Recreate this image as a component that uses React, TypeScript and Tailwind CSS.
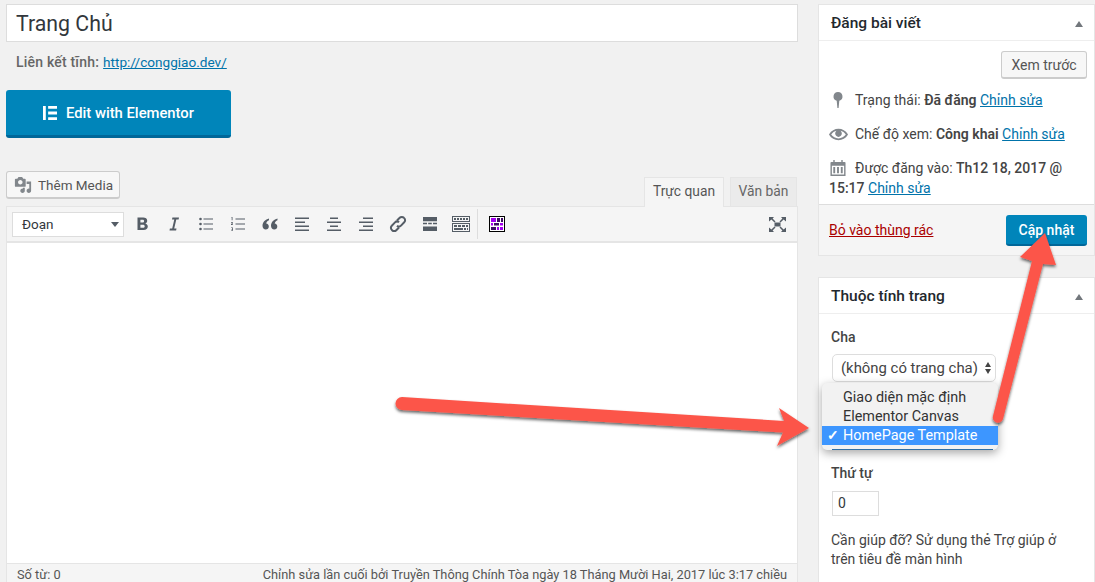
import React from "react";

const Ic = ({ children, w = 20, h = 20, vb = "0 0 20 20", className = "" }: { children: React.ReactNode; w?: number; h?: number; vb?: string; className?: string }) => (
  <svg width={w} height={h} viewBox={vb} fill="#555d66" className={"shrink-0 " + className}>
    {children}
  </svg>
);

const Bold = () => <Ic><path d="M5.500 3.500h5.700c2.400 0 4 1.200 4 3.200 0 1.300-.7 2.300-1.900 2.800 1.600.4 2.500 1.600 2.500 3.100 0 2.200-1.700 3.400-4.200 3.400H5.500V3.500zm2.900 2.200v2.900h2c1.100 0 1.700-.5 1.700-1.500s-.6-1.400-1.700-1.400h-2zm0 5v3.100h2.400c1.200 0 1.900-.6 1.900-1.600s-.7-1.500-1.900-1.500H8.400z" /></Ic>;
const Italic = () => <Ic><path d="M15 3.500l-.4 2h-2.300L10.200 14.500h2.300l-.4 2H5.500l.4-2h2.300L10.300 5.500H8l.4-2H15z" /></Ic>;
const Bullets = () => <Ic><circle cx="4.500" cy="5" r="1.300" /><circle cx="4.500" cy="10" r="1.300" /><circle cx="4.500" cy="15" r="1.300" /><path d="M7.500 4.500H17v1H7.500zM7.500 9.500H17v1H7.500zM7.500 14.500H17v1H7.500z" /></Ic>;
const Numbers = () => <Ic><path d="M7.500 4.500H17v1H7.500zM7.500 9.500H17v1H7.500zM7.500 14.500H17v1H7.500z" /><path d="M3.500 3h1v3.200h-.8V3.800h-.3zM3 8.300h2v.7L4 10.300h1v.6H3v-.6l1.100-1.400H3zM3 13.400h2v3.400H3v-.6h1.200v-.8h-.8v-.5h.8V14H3z" /></Ic>;
const Quote = () => <Ic><path d="M9 4.500C5.500 5.500 2.500 8 2.500 11.800c0 2.200 1.400 3.700 3.300 3.700 1.700 0 3-1.300 3-3 0-1.600-1.100-2.800-2.600-2.900.2-1.500 1.400-2.600 2.800-3.300zM17.500 4.500c-3.500 1-6.500 3.500-6.500 7.300 0 2.200 1.400 3.700 3.300 3.700 1.700 0 3-1.300 3-3 0-1.600-1.100-2.800-2.600-2.900.2-1.500 1.400-2.600 2.800-3.300z" /></Ic>;
const AlignL = () => <Ic><path d="M3 3.500h14v1.500H3zM3 7.500h10v1.500H3zM3 11.500h14V13H3zM3 15.500h14V17H3z" /></Ic>;
const AlignC = () => <Ic><path d="M6 3.500h8v1.500H6zM3 7.500h14v1.500H3zM6 11.500h8V13H6zM3 15.500h14V17H3z" /></Ic>;
const AlignR = () => <Ic><path d="M7 3.500h10v1.500H7zM3 7.500h14v1.500H3zM7 11.500h10V13H7zM3 15.500h14V17H3z" /></Ic>;
const LinkI = () => (
  <Ic>
    <g fill="none" stroke="#555d66" strokeWidth="2">
      <path d="M9 6.500l2.700-2.700a2.900 2.900 0 0 1 4.200 0l.3.300a2.900 2.900 0 0 1 0 4.200L13 11.600a2.900 2.900 0 0 1-4 .1" />
      <path d="M11 13.500l-2.700 2.700a2.900 2.900 0 0 1-4.200 0l-.3-.3a2.900 2.900 0 0 1 0-4.200L7 8.400a2.900 2.900 0 0 1 4-.1" />
    </g>
  </Ic>
);
const More = () => <Ic><path d="M3 3h14v4.300H3zM3 8.700h4v1.600H3zM8.200 8.700h3.600v1.600H8.200zM13 8.700h4v1.600h-4zM3 12.500h14V17H3z" /></Ic>;
const Kitchen = () => (
  <svg width="18" height="16" viewBox="0 0 18 16" className="shrink-0">
    <path fillRule="evenodd" fill="#555d66" d="M0 0h18v6H0zM1 1v4h16V1zM0 7h18v9H0zM1 8v7h16V8z" />
    <path fill="#555d66" d="M2 2h2v2H2zM5 2h2v2H5zM8 2h2v2H8zM11 2h2v2h-2zM14 2h2v2h-2zM2 9h3v2H2zM6 9h3v2H6zM10 9h3v2h-3zM14 9h2v2h-2zM2 12h9v2H2zM12 12h2v2h-2zM15 12h1v2h-1z" />
  </svg>
);
const Purple = () => (
  <svg width="16" height="16" viewBox="0 0 16 16" className="shrink-0">
    <rect x="0.500" y="0.500" width="15" height="15" fill="#fff" stroke="#000" />
    <path fill="#a200ee" d="M2 2h5v4H2zM11 7h3v2.500h-3zM2 7h2v2.500H2zM8 11h2v3H8zM11 11h3v3h-3z" />
    <path fill="#3d0a63" d="M8 2h3v4H8zM12 2h2v4h-2zM5 7h5v2.500H5zM2 11h5v3H2z" />
  </svg>
);
const Fullscreen = () => (
  <svg width="17" height="15" viewBox="0 0 17 15" className="shrink-0" fill="#555d66">
    <path d="M5.500 5.500h6v4h-6z" />
    <path d="M0 0h5L3.600 1.500 6.500 4.500 5.500 5.500 2.400 2.600 0 4.500zM17 0h-5l1.400 1.500-2.900 3 1 1 3.100-2.900L17 4.500zM0 15h5l-1.400-1.500 2.900-3-1-1-3.100 2.900L0 10.500zM17 15h-5l1.400-1.500-2.900-3 1-1 3.100 2.900 2.400-1.900z" />
  </svg>
);
const Media = () => (
  <svg width="18" height="18" viewBox="0 0 20 20" fill="#82878c" className="shrink-0">
    <path d="M13 11V4c0-.55-.45-1-1-1h-1.670L9 1H5L3.670 3H2c-.55 0-1 .45-1 1v7c0 .55.45 1 1 1h10c.55 0 1-.45 1-1zM7 4.500c1.380 0 2.500 1.120 2.500 2.500S8.380 9.500 7 9.500 4.500 8.380 4.500 7 5.620 4.500 7 4.500zM14 6h5v10.500c0 1.380-1.120 2.500-2.500 2.500S14 17.880 14 16.500s1.120-2.500 2.500-2.500c.17 0 .34.020.5.050V9h-3V6zm-4 8.050V13h2v3.500c0 1.380-1.120 2.500-2.500 2.500S7 17.880 7 16.500 8.120 14 9.500 14c.17 0 .34.020.5.050z" />
  </svg>
);
const Elementor = () => (
  <svg width="14" height="14" viewBox="0 0 15 15" fill="#fff" className="shrink-0">
    <path d="M0 0h3v15H0zM5.500 0H15v3H5.500zM5.500 6H15v3H5.500zM5.500 12H15v3H5.500z" />
  </svg>
);
const Pin = () => (
  <svg width="10" height="16" viewBox="0 0 10 16" fill="#82878c" className="shrink-0">
    <path d="M5 0a4.500 4.500 0 0 1 1.300 8.800L5.600 16H4.400l-.7-7.200A4.500 4.500 0 0 1 5 0z" />
  </svg>
);
const Eye = () => (
  <svg width="19" height="19" viewBox="0 0 20 20" fill="#82878c" className="shrink-0">
    <path d="M19.700 9.400C17.700 6 14 3.900 10 3.900S2.300 6 .3 9.400L0 10l.3.600c2 3.400 5.700 5.500 9.700 5.500s7.700-2.100 9.700-5.500l.3-.6-.3-.6zM10 14.100c-3.100 0-6-1.600-7.700-4.100C3.600 8 5.700 6.600 8 6.100c-.9.600-1.500 1.700-1.500 2.900 0 1.900 1.600 3.500 3.500 3.500s3.500-1.600 3.500-3.500c0-1.200-.6-2.300-1.500-2.900 2.300.5 4.400 1.900 5.700 3.900-1.700 2.500-4.600 4.100-7.700 4.100z" />
  </svg>
);
const Calendar = () => (
  <svg width="16" height="16" viewBox="0 0 16 17" fill="#82878c" className="shrink-0">
    <path fillRule="evenodd" d="M1 2h2V0h1.500v2h7V0H13v2h2a1 1 0 0 1 1 1v14H0V3a1 1 0 0 1 1-1zM1.500 6v9.500h13V6z" />
    <path d="M3 7.500h2V14H3zM7 7.500h2V14H7zM11 7.500h2V14h-2z" />
  </svg>
);
const Caret = () => <span className="w-0 h-0 border-l-[4px] border-r-[4px] border-b-[6px] border-l-transparent border-r-transparent border-b-[#72777c]" />;

const LinkT = ({ children }: { children: React.ReactNode }) => <a className="text-[#0073aa] underline">{children}</a>;

const ToolBtn = ({ children, w = 32 }: { children: React.ReactNode; w?: number }) => (
  <span className="flex items-center justify-center h-[28px]" style={{ width: w }}>{children}</span>
);

export default function App() {
  return (
    <div className="relative w-[1095px] h-[582px] overflow-hidden bg-[#f1f1f1] flex items-start pl-[6px] pt-[4px] text-[14px] text-[#444] font-['Roboto','Liberation_Sans',sans-serif]">
      <main className="w-[792px] shrink-0 flex flex-col">
        <div className="h-[38px] bg-white border border-[#ddd] flex items-center pl-[9px] pt-[2px] text-[21.3px] text-[#32373c]">Trang Chủ</div>
        <div className="mt-[10px] h-[20px] pl-[10px] flex items-center gap-[4px] font-medium text-[#666] text-[14px] tracking-[0.2px]">
          <span>Liên kết tĩnh:</span>
          <span className="font-normal text-[13.6px] tracking-normal"><LinkT>http://conggiao.dev/</LinkT></span>
        </div>
        <button className="mt-[18px] w-[225px] h-[48px] rounded-[3px] bg-[#0085ba] border-b-[3px] border-[#006799] flex items-center justify-center gap-[9px] pt-[1px] text-white text-[14.8px] font-medium">
          <Elementor />
          <span>Edit with Elementor</span>
        </button>
        <div className="mt-[33px] h-[35px] flex items-start justify-between">
          <button className="w-[114px] h-[28px] bg-[#f7f7f7] border border-[#ccc] rounded-[3px] border-b-[2px] flex items-center pl-[7px] gap-[6px] pt-[1px] text-[#555] text-[13.5px]">
            <Media />
            <span>Thêm Media</span>
          </button>
          <div className="flex items-end self-end gap-[6px] pr-px relative z-10 -mb-px">
            <span className="w-[80px] h-[30px] pb-[2px] bg-[#f5f5f5] border border-[#e5e5e5] border-b-0 flex items-center justify-center text-[#555] text-[13.8px]">Trực quan</span>
            <span className="w-[67px] h-[29px] mb-px pb-[2px] bg-[#ebebeb] border border-[#e5e5e5] border-b-0 flex items-center justify-center text-[#666] text-[13.8px]">Văn bản</span>
          </div>
        </div>
        <div className="flex flex-col border border-[#e5e5e5] bg-white">
          <div className="h-[36px] bg-[#f5f5f5] border-b-2 border-[#e5e5e5] flex items-center pl-[5px] pr-[11px] shrink-0">
            <div className="w-[112px] h-[25px] bg-white border border-[#ddd] flex items-center justify-between pl-[9px] pr-[3px] text-[#32373c] text-[13.5px] mr-[2px]">
              <span>Đoạn</span>
              <span className="w-0 h-0 mr-[1px] border-l-[4px] border-r-[4px] border-t-[5px] border-l-transparent border-r-transparent border-t-[#555d66]" />
            </div>
            <ToolBtn><Bold /></ToolBtn>
            <ToolBtn><Italic /></ToolBtn>
            <ToolBtn><Bullets /></ToolBtn>
            <ToolBtn><Numbers /></ToolBtn>
            <ToolBtn><Quote /></ToolBtn>
            <ToolBtn><AlignL /></ToolBtn>
            <ToolBtn><AlignC /></ToolBtn>
            <ToolBtn><AlignR /></ToolBtn>
            <ToolBtn><LinkI /></ToolBtn>
            <ToolBtn><More /></ToolBtn>
            <ToolBtn w={30}><Kitchen /></ToolBtn>
            <span className="w-px h-[30px] bg-[#ddd] ml-[1px]" />
            <span className="ml-[11px]"><Purple /></span>
            <span className="ml-auto"><Fullscreen /></span>
          </div>
          <div className="h-[320px] bg-white" />
          <div className="h-[23px] bg-[#f5f5f5] border-t border-[#e5e5e5] flex items-center justify-between pl-[10px] pr-[10px] text-[12.8px] text-[#555] shrink-0">
            <span>Số từ: 0</span>
            <span>Chỉnh sửa lần cuối bởi Truyền Thông Chính Tòa ngày 18 Tháng Mười Hai, 2017 lúc 3:17 chiều</span>
          </div>
        </div>
      </main>

      <aside className="ml-[20px] w-[277px] shrink-0 flex flex-col gap-[21px]">
        <section className="h-[252px] shrink-0 bg-white border border-[#e5e5e5] flex flex-col">
          <div className="h-[36px] border-b border-[#eee] flex items-center justify-between pl-[12px] pr-[11px] pt-[2px] text-[15.5px] font-medium text-[#23282d] shrink-0">
            <span>Đăng bài viết</span>
            <Caret />
          </div>
          <div className="flex-1">
            <div className="flex justify-end pt-[10px] pr-[7px]">
              <button className="w-[86px] h-[28px] pt-[1px] bg-[#f7f7f7] border border-[#ccc] border-b-[2px] rounded-[3px] text-[#555]">Xem trước</button>
            </div>
            <div className="flex items-center h-[18px] mt-[12px] pl-[14px]">
              <Pin />
              <span className="ml-[12px]">Trạng thái: <b className="font-semibold">Đã đăng</b> <LinkT>Chỉnh sửa</LinkT></span>
            </div>
            <div className="flex items-center h-[18px] mt-[16px] pl-[10px]">
              <Eye />
              <span className="ml-[7px]">Chế độ xem: <b className="font-semibold">Công khai</b> <LinkT>Chỉnh sửa</LinkT></span>
            </div>
            <div className="mt-[15px] pl-[10px] pr-[8px] leading-[20px]">
              <div className="flex items-center h-[20px] pl-px">
                <Calendar />
                <span className="ml-[9px] whitespace-nowrap">Được đăng vào: <b className="font-medium">Th12 18, 2017 @</b></span>
              </div>
              <div><b className="font-medium">15:17</b> <LinkT>Chỉnh sửa</LinkT></div>
            </div>
          </div>
          <div className="h-[51px] bg-[#f5f5f5] border-t border-[#ddd] flex items-center justify-between pl-[10px] pr-[7px] shrink-0">
            <a className="text-[#a00] underline">Bỏ vào thùng rác</a>
            <button className="w-[81px] h-[31px] pt-[3px] rounded-[3px] bg-[#0085ba] border-b-[2px] border-[#006799] text-white font-medium">Cập nhật</button>
          </div>
        </section>

        <section className="h-[320px] shrink-0 bg-white border border-[#e5e5e5] flex flex-col pb-0">
          <div className="h-[36px] border-b border-[#eee] flex items-center justify-between pl-[12px] pr-[11px] pt-[2px] text-[15.5px] font-medium text-[#23282d] shrink-0">
            <span>Thuộc tính trang</span>
            <Caret />
          </div>
          <div className="pl-[12px] relative">
            <div className="mt-[14px] font-medium text-[#444] h-[18px] leading-[18px]">Cha</div>
            <div className="mt-[8px] ml-px w-[164px] h-[28px] bg-white border border-[#ddd] rounded-[5px] flex items-center justify-between pl-[8px] pr-[4px] text-[14.9px]">
              <span>(không có trang cha)</span>
              <span className="flex flex-col gap-[2px]">
                <span className="w-0 h-0 border-l-[3.500px] border-r-[3.500px] border-b-[5px] border-l-transparent border-r-transparent border-b-[#444]" />
                <span className="w-0 h-0 border-l-[3.500px] border-r-[3.500px] border-t-[5px] border-l-transparent border-r-transparent border-t-[#444]" />
              </span>
            </div>
            <div className="mt-[82px] font-medium h-[18px] leading-[18px]">Thứ tự</div>
            <div className="mt-[9px] ml-px w-[47px] h-[25px] bg-white border border-[#ddd] flex items-center pl-[5px] text-[14px] text-[#32373c]">0</div>
            <p className="mt-[15px] leading-[19px] pr-[30px]">Cần giúp đỡ? Sử dụng thẻ Trợ giúp ở trên tiêu đề màn hình</p>

            <div className="absolute left-[3px] top-[69px] w-[176px] h-[67px] rounded-[5px] bg-[#f2f2f2] shadow-[0_3px_10px_rgba(0,0,0,0.35)] pt-[5px] text-[14.4px] text-[#333] overflow-hidden">
              <div className="h-[19px] leading-[19px] pl-[21px]">Giao diện mặc định</div>
              <div className="h-[19px] leading-[19px] pl-[21px]">Elementor Canvas</div>
              <div className="h-[19px] leading-[19px] pl-[21px] bg-[#3d96ff] text-white relative">
                <span className="absolute left-[5px] top-0 text-[14px] font-bold">✓</span>
                HomePage Template
              </div>
              <div className="absolute left-[10px] right-[5px] bottom-0 h-[1.500px] bg-[#2f6fa5]" />
            </div>
          </div>
        </section>
      </aside>

      <svg className="absolute inset-0 pointer-events-none" width="1095" height="582" viewBox="0 0 1095 582">
        <defs>
          <filter id="sh" x="-10%" y="-30%" width="120%" height="160%">
            <feDropShadow dx="0" dy="2" stdDeviation="1.500" floodColor="#000" floodOpacity="0.6" />
          </filter>
        </defs>
        <path filter="url(#sh)" fill="#fc5549" d="M402 397 L784 421 L779 408 L809 428 L777 446 L783 432.500 L402 410 A6.500 6.500 0 0 1 402 397z" />
        <path filter="url(#sh)" fill="#fc5549" d="M993 416 L1032 261 L1020 257 L1045 233 L1056 265 L1043 264 L1003 419 A5.200 5.200 0 0 1 993 416z" />
      </svg>
    </div>
  );
}
